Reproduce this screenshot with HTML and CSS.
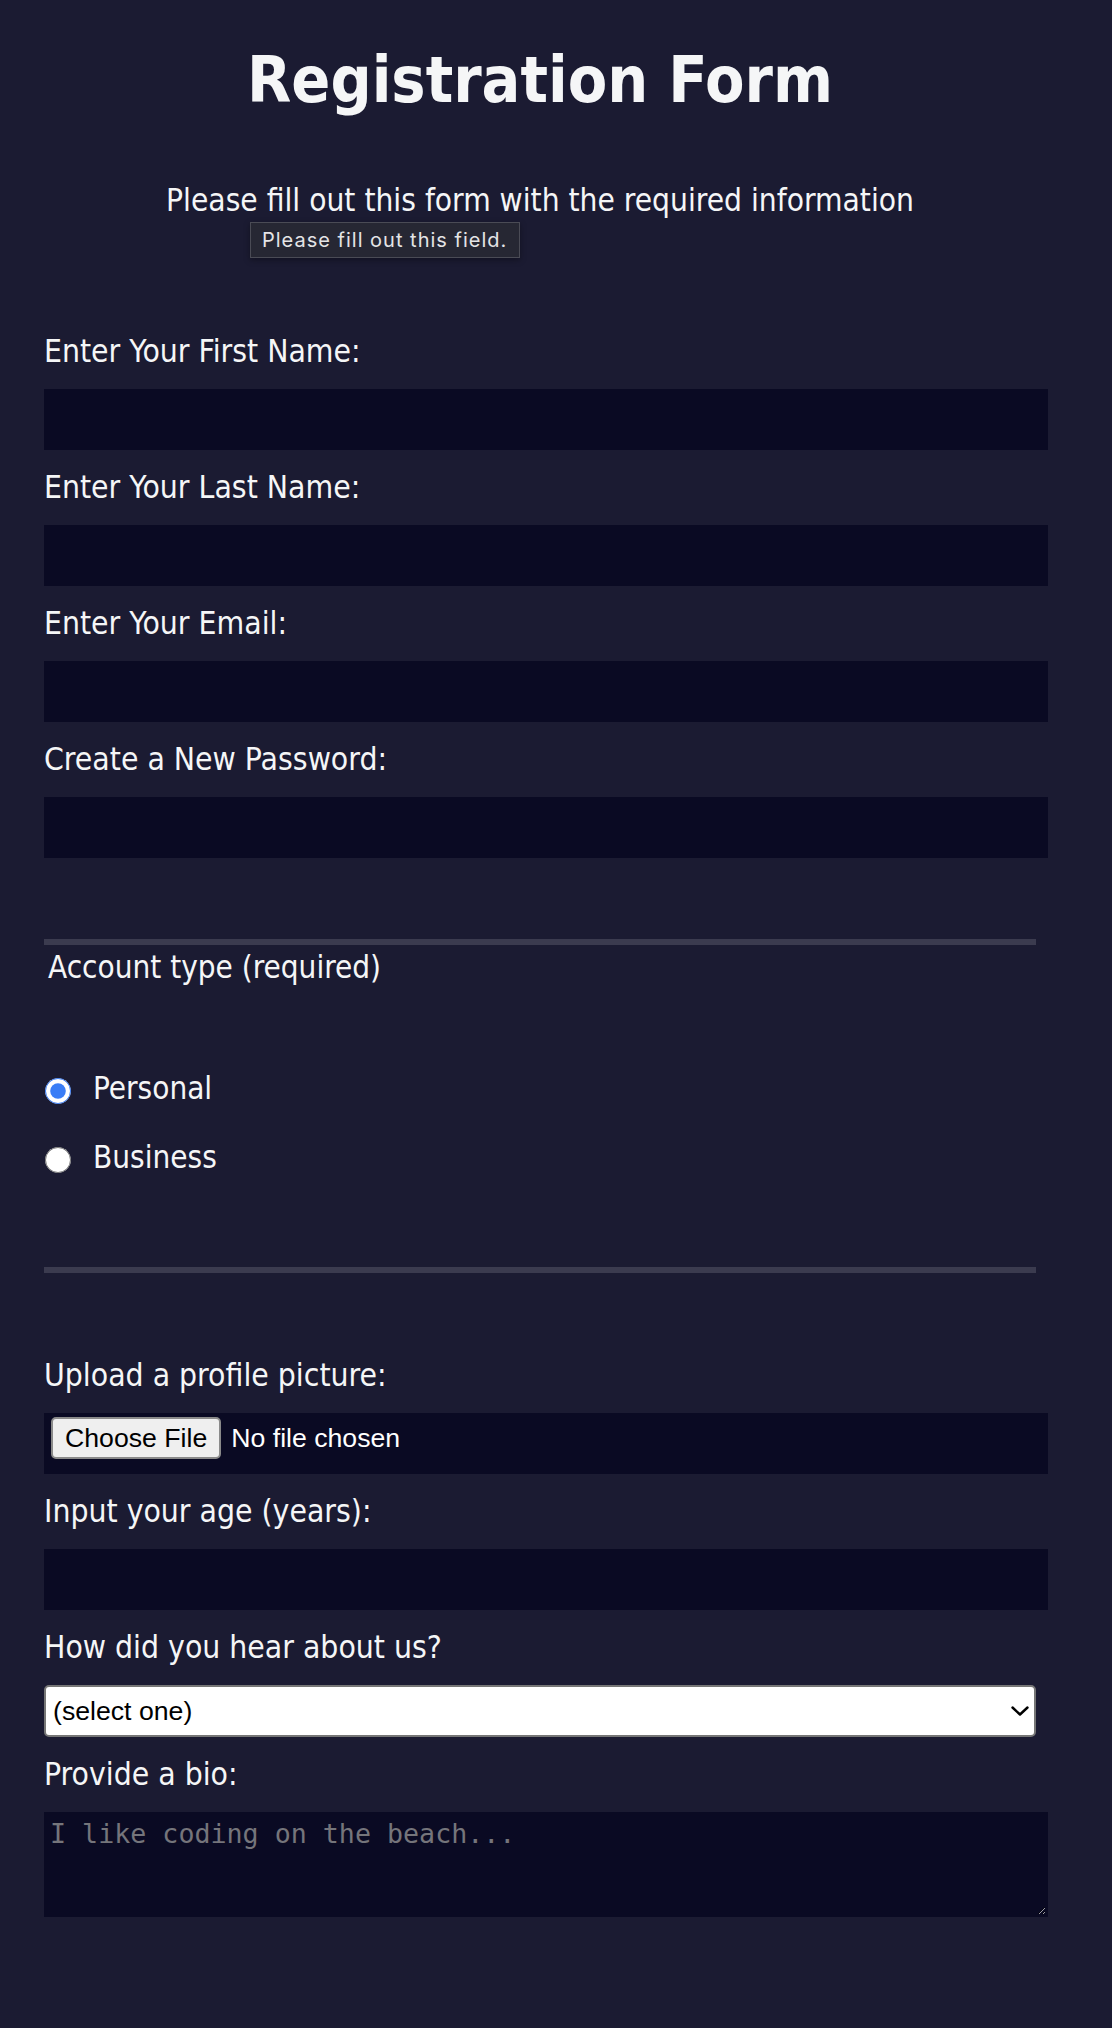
FILE: index.html
```html
<!DOCTYPE html>
<html lang="en">
<head>
<meta charset="utf-8">
<title>Registration Form</title>
<link rel="stylesheet" href="styles.css">
</head>
<body>
<main class="page">
  <h1 class="title">Registration Form</h1>
  <p class="intro">Please fill out this form with the required information</p>
  <div class="tooltip">Please fill out this field.</div>
  <form class="form" onsubmit="return false">
    <div class="section section-names">
      <label class="field first"><span class="field-label">Enter Your First Name:</span><input class="control" type="text" name="first-name" required></label>
      <label class="field"><span class="field-label">Enter Your Last Name:</span><input class="control" type="text" name="last-name" required></label>
      <label class="field"><span class="field-label">Enter Your Email:</span><input class="control" type="email" name="email" required></label>
      <label class="field"><span class="field-label">Create a New Password:</span><input class="control" type="password" name="password" required></label>
    </div>
    <div class="section section-account" role="radiogroup" aria-labelledby="account-legend">
      <div class="legend" id="account-legend">Account type (required)</div>
      <div class="radios">
        <label class="radio-row"><input class="radio" type="radio" name="account-type" checked> Personal</label>
        <label class="radio-row"><input class="radio" type="radio" name="account-type"> Business</label>
      </div>
    </div>
    <div class="section section-extra">
      <label class="field first"><span class="field-label">Upload a profile picture:</span><input class="control control-file" type="file" name="file"></label>
      <label class="field"><span class="field-label">Input your age (years):</span><input class="control" type="number" name="age" min="13" max="120"></label>
      <label class="field"><span class="field-label">How did you hear about us?</span>
        <span class="select-wrap">
          <select class="select" name="referrer">
            <option value="">(select one)</option>
            <option value="1">freeCodeCamp News</option>
            <option value="2">freeCodeCamp YouTube Channel</option>
            <option value="3">freeCodeCamp Forum</option>
            <option value="4">Other</option>
          </select>
          <svg class="chevron" width="18" height="10" viewBox="0 0 18 10" aria-hidden="true"><path d="M1.5 1.5 L9 8.5 L16.5 1.5" fill="none" stroke="#000" stroke-width="2.4" stroke-linecap="round" stroke-linejoin="round"/></svg>
        </span>
      </label>
      <label class="field"><span class="field-label">Provide a bio:</span><textarea class="control textarea" name="bio" rows="3" placeholder="I like coding on the beach..."></textarea></label>
    </div>
  </form>
</main>
</body>
</html>
```

FILE: styles.css
```css
html {
  background: #1b1b32;
}

body {
  margin: 0;
  min-height: 2028px;
  background: #1b1b32;
  color: #f5f6f7;
  font-family: "DejaVu Sans Condensed", "DejaVu Sans", sans-serif;
  font-size: 31.6px;
}

.page {
  position: relative;
  display: flow-root;
  width: 1080px;
}

.title {
  margin: 42px 0 0;
  font-size: 64px;
  line-height: 76px;
  font-weight: bold;
  text-align: center;
}

.intro {
  margin: 63px 0 0;
  font-size: 31.4px;
  line-height: 38px;
  text-align: center;
}

.tooltip {
  position: absolute;
  left: 250px;
  top: 222px;
  width: 270px;
  height: 36px;
  box-sizing: border-box;
  padding-left: 11px;
  background: #262733;
  border: 1px solid #4a4b55;
  box-shadow: 0 2px 6px rgba(0, 0, 0, 0.35);
  color: #e4e4e6;
  font-family: Inter, "Liberation Sans", sans-serif;
  font-size: 20px;
  letter-spacing: 1px;
  line-height: 34px;
  white-space: nowrap;
}

.form {
  width: 992px;
  margin: 0 auto;
}

.section {
  border-bottom: 6px solid #3b3b4f;
}

.section-names {
  padding: 113px 0 81px;
}

.section-account {
  padding: 3px 0 91px;
}

.section-extra {
  padding: 83px 0 0;
  border-bottom: none;
}

.field {
  display: block;
  margin-top: 18px;
}

.field.first {
  margin-top: 0;
}

.field-label {
  display: block;
  line-height: 38px;
}

.control {
  display: block;
  box-sizing: border-box;
  width: calc(100% + 12px);
  height: 61px;
  margin: 19px 0 0;
  padding: 2px 4px;
  background: #0a0a23;
  border: 2px solid #0a0a23;
  color: #ffffff;
  font-family: "Liberation Sans", Arial, sans-serif;
  font-size: 26.67px;
  outline: none;
}

.control-file {
  line-height: 42px;
}

.control-file::file-selector-button {
  box-sizing: border-box;
  height: 42px;
  margin: 0 10px 0 1px;
  padding: 0 12px;
  border: 2px solid #8a8a8a;
  border-radius: 5px;
  background: #efefef;
  color: #000000;
  font-family: "Liberation Sans", Arial, sans-serif;
  font-size: 26.67px;
  vertical-align: top;
}

.legend {
  padding-left: 4px;
  font-size: 31.2px;
  line-height: 38px;
}

.radios {
  display: flex;
  flex-direction: column;
  gap: 31px;
  margin-top: 83px;
}

.radio-row {
  display: flex;
  align-items: center;
  height: 38px;
  line-height: 38px;
  font-size: 31.2px;
}

.radio {
  width: 26px;
  height: 26px;
  margin: 5px 22px 0 1px;
  accent-color: #3a7df6;
}

.select-wrap {
  position: relative;
  display: block;
  margin-top: 19px;
}

.select {
  display: block;
  box-sizing: border-box;
  width: 100%;
  height: 52px;
  margin: 0;
  padding: 0 40px 0 7px;
  appearance: none;
  -webkit-appearance: none;
  background: #ffffff;
  border: 2px solid #767676;
  border-radius: 5px;
  color: #000000;
  font-family: "Liberation Sans", Arial, sans-serif;
  font-size: 26.67px;
}

.chevron {
  position: absolute;
  right: 7px;
  top: 21px;
  pointer-events: none;
}

.textarea {
  height: 105px;
  padding-top: 4px;
  resize: vertical;
  font-family: "DejaVu Sans Mono", "Liberation Mono", monospace;
  font-size: 26.67px;
  line-height: 31px;
}

.textarea::placeholder {
  color: #75757b;
}
```
